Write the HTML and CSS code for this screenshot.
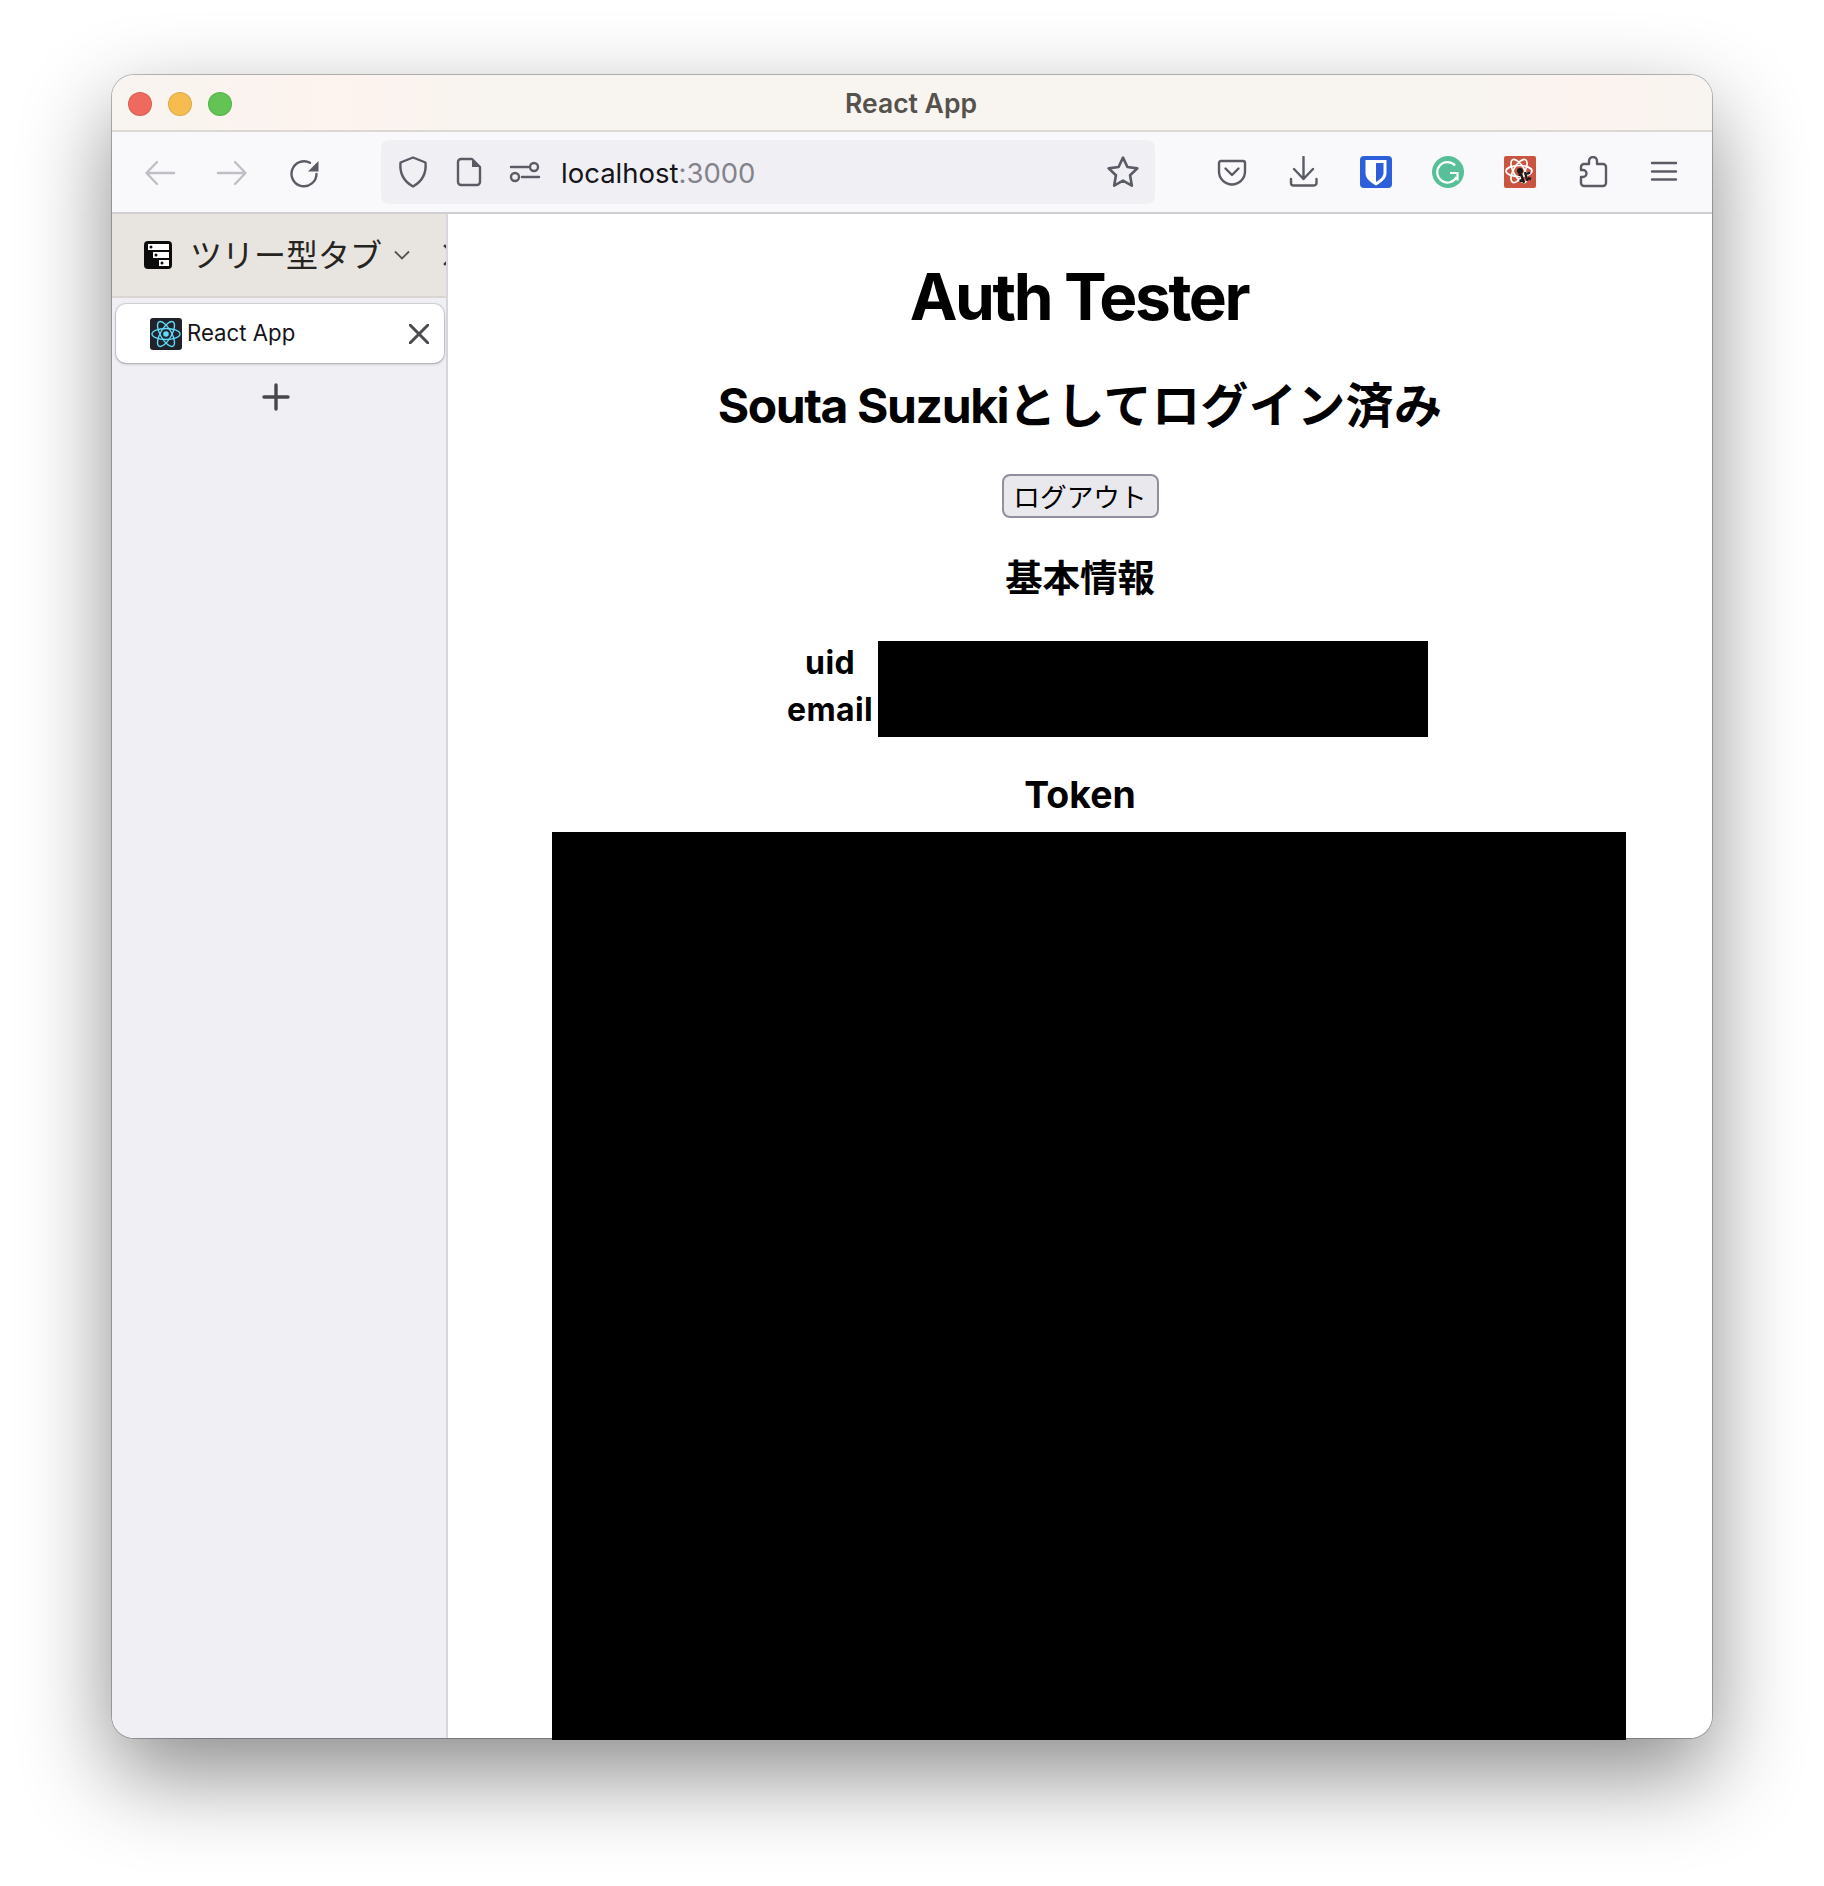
FILE: index.html
```html
<!DOCTYPE html>
<html lang="ja">
<head>
  <meta charset="UTF-8">
  <title>React App</title>
  <link rel="stylesheet" href="styles.css">
</head>
<body>
  <div class="window">
    <div class="titlebar">
      <div class="lights">
        <span class="light red"></span>
        <span class="light yellow"></span>
        <span class="light green"></span>
      </div>
      <div class="window-title">React App</div>
    </div>

    <div class="toolbar">
      <div class="tool nav"><svg class="icon faded" viewBox="0 0 32 32"><path d="M30 16H3M13 5 2.500 16 13 27"/></svg></div>
      <div class="tool nav"><svg class="icon faded" viewBox="0 0 32 32"><path d="M2 16h27M19 5l10.500 11L19 27"/></svg></div>
      <div class="tool nav"><svg class="icon" viewBox="0 0 32 32"><path d="M22 5.800A12.500 12.500 0 1 0 28.500 17"/><path class="solid" d="M30.500 4v10.500H20z"/></svg></div>

      <div class="urlbar">
        <svg class="icon" viewBox="0 0 32 32"><path d="M16 1.500 28.500 6.500C29.500 17 25 25.500 16 30.500 7 25.500 2.500 17 3.500 6.500z"/></svg>
        <svg class="icon" viewBox="0 0 32 32"><path d="M8 3h11l8 8v15a3 3 0 0 1-3 3H8a3 3 0 0 1-3-3V6a3 3 0 0 1 3-3z"/><path class="solid" d="M19 3l8 8h-8z"/></svg>
        <svg class="icon" viewBox="0 0 32 32"><path d="M2 11h17M13 21h17"/><circle cx="25" cy="11" r="4"/><circle cx="6" cy="21" r="4"/></svg>
        <span class="url">localhost<span class="port">:3000</span></span>
        <svg class="icon star" viewBox="1.500 1.500 29 29"><path d="M16 3l4 8.500 9 1.200-6.600 6.300L24 28.300l-8-4.500-8 4.500L9.600 19 3 12.700l9-1.200z"/></svg>
      </div>

      <div class="tools-right">
        <div class="tool"><svg class="icon" viewBox="0 0 32 32"><path d="M5 5h22a2 2 0 0 1 2 2v8.500a13 13 0 0 1-26 0V7a2 2 0 0 1 2-2z"/><path d="M9.500 12.500 16 19l6.500-6.500"/></svg></div>
        <div class="tool"><svg class="icon" viewBox="0 0 32 32"><path d="M15.500 1v22M6 13l9.500 10L25 13M3 23v4a2.500 2.500 0 0 0 2.500 2.500h20.500a2.500 2.500 0 0 0 2.500-2.500v-4"/></svg></div>
        <div class="tool">
          <svg class="ext" viewBox="0 0 32 32"><rect width="32" height="32" rx="4" fill="#2c5fd9"/><path fill="#fff" d="M5.500 4h21v13c0 6-6 10-10.500 12.500C11.500 27 5.500 23 5.500 17z"/><path fill="#2c5fd9" d="M16 7h7.500v10c0 3.500-3.500 6.500-7.500 9z"/></svg>
        </div>
        <div class="tool">
          <svg class="ext" viewBox="0 0 32 32"><circle cx="16" cy="16" r="16" fill="#57bf9a"/><path fill="none" stroke="#fff" stroke-width="2.200" d="M23 9.500a10.200 10.200 0 1 0 1.500 11.500M18 17h7.500v7.500"/></svg>
        </div>
        <div class="tool">
          <svg class="ext" viewBox="0 0 32 32">
            <rect width="32" height="32" rx="2" fill="#c9543f"/>
            <g fill="none" stroke="#fff" stroke-width="1.700">
              <ellipse cx="15" cy="15" rx="13" ry="5.500"/>
              <ellipse cx="15" cy="15" rx="13" ry="5.500" transform="rotate(60 15 15)"/>
              <ellipse cx="15" cy="15" rx="13" ry="5.500" transform="rotate(120 15 15)"/>
            </g>
            <circle cx="16" cy="15" r="3" fill="#1a1a1a"/>
            <path fill="none" stroke="#1a1a1a" stroke-width="2.400" d="M17 18l3 9M21 16l2.500 9M18 20l-3.500-1.500M19 24l-3.500 1M23 18l3-1.500M24 22l3 1"/>
          </svg>
        </div>
        <div class="tool"><svg class="icon" viewBox="0 0 32 32"><path d="M8 8h5V5a4 4 0 0 1 8 0v3h6a3 3 0 0 1 3 3v16a3 3 0 0 1-3 3H8a3 3 0 0 1-3-3v-6h2a3.500 3.500 0 0 0 0-7H5v-3a3 3 0 0 1 3-3z"/></svg></div>
        <div class="tool"><svg class="icon" viewBox="0 0 32 32"><path d="M4 7h24M4 15.500h24M4 23.500h24"/></svg></div>
      </div>
    </div>

    <div class="browser">
      <aside class="sidebar">
        <div class="sidebar-head">
          <svg class="tree-icon" viewBox="0 0 28 28">
            <rect width="28" height="28" rx="4" fill="#0c0c0d"/>
            <path fill="#fff" d="M4 3h21v6H4zM9 11h16v6H9zM15 19h10v6H15z"/>
            <circle cx="7" cy="6" r="1.500" fill="#0c0c0d"/>
            <circle cx="12" cy="14" r="1.500" fill="#0c0c0d"/>
            <circle cx="18" cy="22" r="1.500" fill="#0c0c0d"/>
          </svg>
          <span class="sidebar-title">ツリー型タブ</span>
          <svg class="chevron" viewBox="0 0 16 10"><path d="M1 1.500 8 8.500l7-7"/></svg>
          <svg class="sidebar-close" viewBox="0 0 20 20"><path d="M1 1l18 18M19 1 1 19"/></svg>
        </div>

        <div class="tab">
          <svg class="favicon" viewBox="0 0 32 32">
            <rect width="32" height="32" rx="3" fill="#20232a"/>
            <g fill="none" stroke="#61dafb" stroke-width="1.400">
              <ellipse cx="16" cy="16" rx="14" ry="5.500"/>
              <ellipse cx="16" cy="16" rx="14" ry="5.500" transform="rotate(60 16 16)"/>
              <ellipse cx="16" cy="16" rx="14" ry="5.500" transform="rotate(120 16 16)"/>
            </g>
            <circle cx="16" cy="16" r="2.800" fill="#61dafb"/>
          </svg>
          <span class="tab-label">React App</span>
          <svg class="tab-close" viewBox="0 0 20 20"><path d="M1 1l18 18M19 1 1 19"/></svg>
        </div>

        <svg class="new-tab" viewBox="0 0 28 28"><path d="M14 2v24M2 14h24"/></svg>
      </aside>

      <main class="page">
        <h1>Auth Tester</h1>
        <h2><span class="latin">Souta Suzuki</span>としてログイン済み</h2>
        <button class="logout">ログアウト</button>
        <h3 class="basic">基本情報</h3>
        <div class="info">
          <div class="labels">
            <div class="label">uid</div>
            <div class="label">email</div>
          </div>
          <div class="redacted"></div>
        </div>
        <h3 class="token-title">Token</h3>
        <div class="token"></div>
      </main>
    </div>
  </div>
</body>
</html>
```

FILE: styles.css
```css
html, body {
  height: 100%;
}
body {
  margin: 0;
  height: 1886px;
  overflow: hidden;
  box-sizing: border-box;
  padding: 75px 112px 0;
  background: #fff;
  color: #000;
  font-family: Inter, "Noto Sans CJK JP", sans-serif;
}
.window {
  width: 1600px;
  height: 1663px;
  display: flex;
  flex-direction: column;
  border-radius: 22px;
  background: #fff;
  box-shadow: 0 0 0 1px rgba(0, 0, 0, 0.25), 0 36px 90px rgba(0, 0, 0, 0.46);
}

/* title bar */
.titlebar {
  height: 55px;
  flex: none;
  display: flex;
  align-items: center;
  position: relative;
  border-radius: 22px 22px 0 0;
  border-bottom: 2px solid #dcd8d4;
  background: linear-gradient(90deg, #f8f4ef 0, #fdf3ef 14%, #f8f4ef 24%, #f8f4ef 85%, #fcf3ef 92%, #f8f4ef 100%);
}
.lights {
  display: flex;
  gap: 16px;
  padding: 2px 0 0 16px;
}
.light {
  width: 24px;
  height: 24px;
  border-radius: 50%;
  box-sizing: border-box;
  border: 1px solid rgba(0, 0, 0, 0.1);
}
.red { background: #ee6a5f; }
.yellow { background: #f5bd4f; }
.green { background: #61c454; }
.window-title {
  position: absolute;
  left: 0;
  right: 2px;
  text-align: center;
  font-size: 26.5px;
  font-weight: 600;
  color: #55514d;
}

/* toolbar */
.toolbar {
  height: 80px;
  flex: none;
  display: flex;
  align-items: center;
  padding: 0 12px;
  border-bottom: 2px solid #cfcfd1;
  background: #f9f9fb;
}
.tool {
  width: 72px;
  display: flex;
  justify-content: center;
}
.tool.nav {
  margin-top: 2px;
}
.tools-right {
  display: flex;
  margin-left: 41px;
}
.icon {
  width: 32px;
  height: 32px;
  fill: none;
  stroke: #5b5b66;
  stroke-width: 2.4;
  stroke-linecap: round;
  stroke-linejoin: round;
}
.icon .solid {
  fill: #5b5b66;
  stroke: none;
}
.icon.faded {
  stroke: #bfbfc5;
}
.ext {
  width: 32px;
  height: 32px;
}
.urlbar {
  width: 774px;
  height: 64px;
  margin-left: 41px;
  box-sizing: border-box;
  padding: 0 16px;
  display: flex;
  align-items: center;
  gap: 24px;
  border-radius: 8px;
  background: #f0f0f4;
}
.url {
  margin: 2px 0 0 -4px;
  font-size: 27.5px;
  color: #15141a;
}
.port {
  color: #83838c;
}
.star {
  margin-left: auto;
}

/* browser body */
.browser {
  flex: 1;
  display: flex;
  min-height: 0;
}
.sidebar {
  width: 334px;
  flex: none;
  display: flex;
  flex-direction: column;
  border-right: 2px solid #d7d7db;
  border-radius: 0 0 0 22px;
  background: #f0f0f4;
}
.sidebar-head {
  height: 82px;
  flex: none;
  display: flex;
  align-items: center;
  padding-left: 32px;
  overflow: hidden;
  border-bottom: 2px solid #d9d5d1;
  background: #e8e4e0;
}
.tree-icon {
  width: 28px;
  height: 28px;
  flex: none;
}
.sidebar-title {
  margin: -5px 0 0 18px;
  font-size: 32px;
  font-weight: 400;
  white-space: nowrap;
  color: #26241f;
}
.chevron {
  width: 16px;
  height: 10px;
  flex: none;
  margin-left: 12px;
  fill: none;
  stroke: #55514d;
  stroke-width: 1.8;
}
.sidebar-close {
  width: 22px;
  height: 22px;
  flex: none;
  margin-left: 33px;
  fill: none;
  stroke: #33312e;
  stroke-width: 2.2;
}
.tab {
  height: 59px;
  margin: 6px 2px 0 4px;
  box-sizing: border-box;
  padding: 0 15px 0 34px;
  display: flex;
  align-items: center;
  border-radius: 10px;
  background: #fff;
  box-shadow: 0 0 0 1px rgba(0, 0, 0, 0.1), 0 1px 3px rgba(0, 0, 0, 0.25);
}
.favicon {
  width: 32px;
  height: 32px;
  flex: none;
}
.tab-label {
  margin: -2px 0 0 5px;
  font-size: 22.2px;
  color: #15141a;
}
.tab-close {
  width: 20px;
  height: 20px;
  margin-left: auto;
  fill: none;
  stroke: #4a4a4f;
  stroke-width: 3;
  stroke-linecap: round;
}
.new-tab {
  width: 28px;
  height: 28px;
  margin: 20px 0 0 150px;
  fill: none;
  stroke: #45454a;
  stroke-width: 3.4;
  stroke-linecap: round;
}

/* page content */
.page {
  flex: 1;
  min-width: 0;
  display: flex;
  flex-direction: column;
  align-items: center;
  padding-top: 44px;
  border-radius: 0 0 22px 0;
  background: #fff;
}
.page > * {
  flex: none;
}
h1 {
  margin: 0 2px 0 0;
  font-size: 64px;
  line-height: 78px;
  font-weight: 700;
  letter-spacing: -2.4px;
}
h2 {
  margin: 41px 0 0;
  font-size: 48px;
  line-height: 58px;
  font-weight: 700;
  letter-spacing: 0.4px;
}
.latin {
  letter-spacing: -1.4px;
}
h3 {
  margin: 0;
  font-size: 37.44px;
  line-height: 45px;
  font-weight: 700;
}
.logout {
  margin-top: 39px;
  width: 157px;
  height: 44px;
  padding: 0;
  font-family: "Noto Sans CJK JP", sans-serif;
  font-size: 26.67px;
  line-height: 1;
  color: #000;
  border: 2px solid #8f8f9d;
  border-radius: 8px;
  background: #e9e9ed;
}
.basic {
  margin-top: 38px;
}
.info {
  align-self: flex-start;
  display: flex;
  margin: 40px 0 0 339px;
}
.labels {
  margin: -2px 5px 0 0;
}
.label {
  height: 47px;
  display: flex;
  align-items: center;
  justify-content: center;
  font-size: 32px;
  font-weight: 700;
  letter-spacing: 0.4px;
}
.redacted {
  width: 550px;
  height: 96px;
  background: #000;
}
.token-title {
  margin-top: 35px;
}
.token {
  align-self: flex-start;
  width: 1074px;
  height: 908px;
  margin: 15px 0 0 104px;
  background: #000;
}
```
